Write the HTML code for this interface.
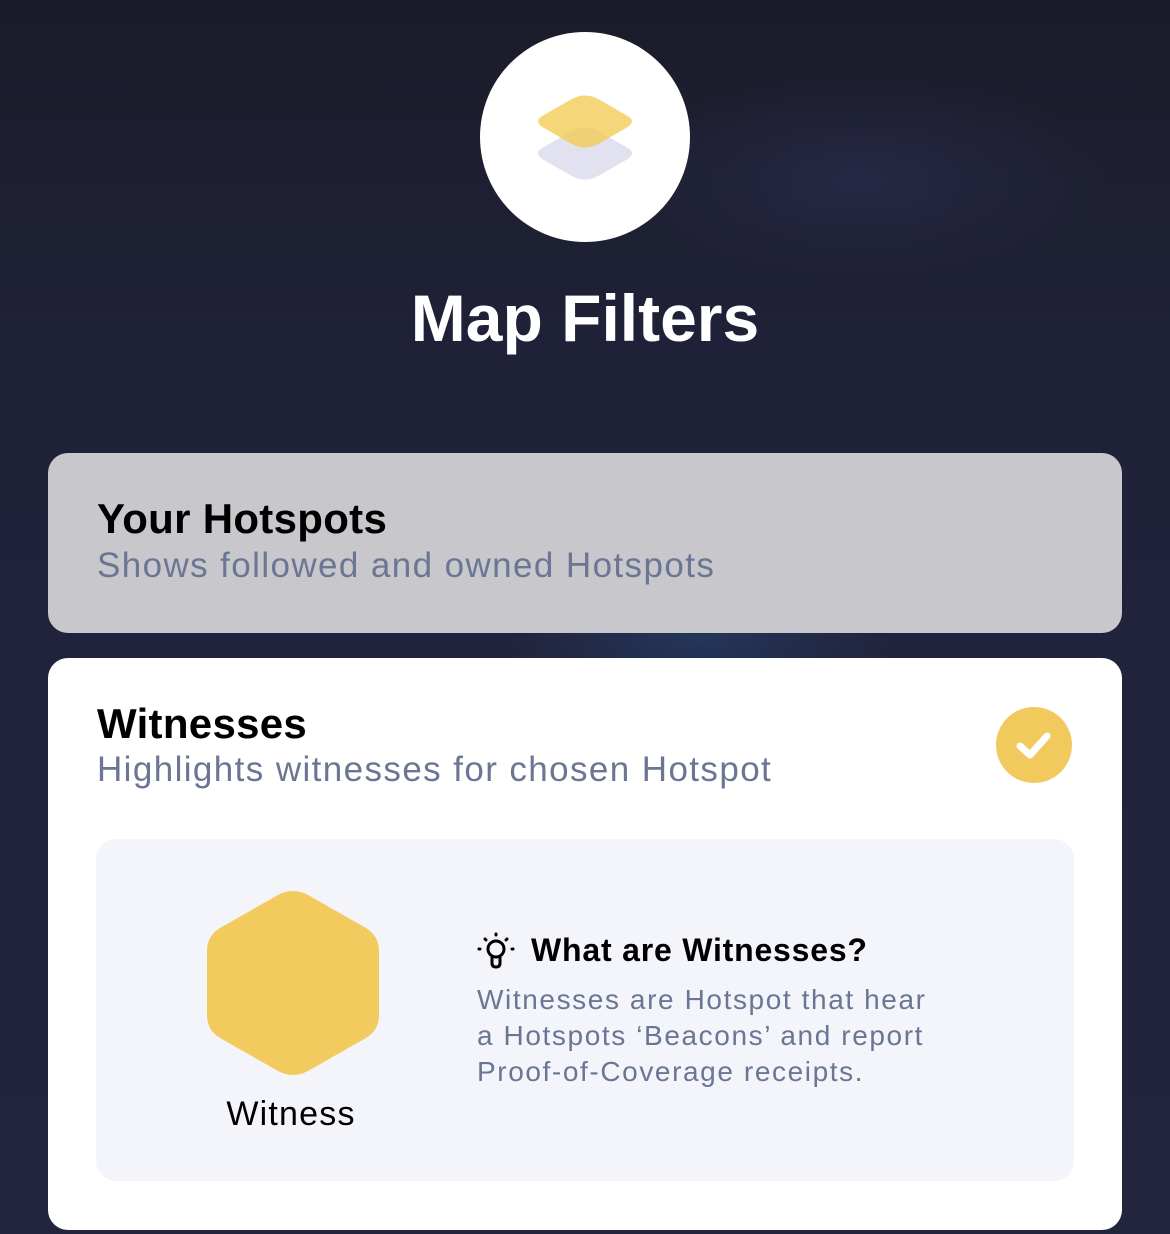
<!DOCTYPE html>
<html><head><style>
*{margin:0;padding:0;box-sizing:border-box}
body{width:1170px;height:1234px;overflow:hidden;font-family:"Liberation Sans",sans-serif;
background:radial-gradient(ellipse 250px 100px at 860px 180px,#262845,transparent),radial-gradient(ellipse 200px 60px at 700px 640px,#24365a,transparent),linear-gradient(#1b1c2a 0,#20223a 400px,#23243e 1234px);position:relative}
.abs{position:absolute}
.circle{left:480px;top:32px;width:210px;height:210px;border-radius:50%;background:#fff}
h1{position:absolute;left:0;width:1170px;text-align:center;top:280px;font-size:66px;color:#fff;font-weight:bold}
.card{position:absolute;left:48px;width:1074px;border-radius:20px}
.t{position:absolute;left:49px;font-size:42px;font-weight:bold;color:#000;letter-spacing:0.3px}
.s{position:absolute;left:49px;font-size:35px;color:#6b7594;letter-spacing:1.4px}
</style></head><body>
<div class="abs circle"></div>
<svg class="abs" style="left:530px;top:88px" width="110" height="100" viewBox="0 0 110 100">
<path d="M14 59 L40 44 Q55 35 70 44 L96 59 Q108 65 96 72 L70 87 Q55 96 40 87 L14 72 Q2 65 14 59Z" fill="#e1e1ef"/>
<path d="M14 27 L40 12 Q55 3 70 12 L96 27 Q108 33 96 40 L70 55 Q55 64 40 55 L14 40 Q2 33 14 27Z" fill="#f2c94c" opacity="0.75"/>
</svg>
<h1>Map Filters</h1>
<div class="card" style="top:453px;height:180px;background:#c7c7cc">
<div class="t" style="top:42px">Your Hotspots</div>
<div class="s" style="top:93px">Shows followed and owned Hotspots</div>
</div>
<div class="card" style="top:658px;height:572px;background:#fff">
<div class="t" style="top:42px">Witnesses</div>
<div class="s" style="top:92px">Highlights witnesses for chosen Hotspot</div>
<svg class="abs" style="left:948px;top:49px" width="76" height="76" viewBox="0 0 76 76"><circle cx="38" cy="38" r="38" fill="#f2c95d"/><path d="M24 39 L34 48 L51 29" stroke="#fff" stroke-width="7" fill="none" stroke-linecap="round" stroke-linejoin="round"/></svg>
<div class="abs" style="left:48px;top:181px;width:978px;height:342px;background:#f4f5fa;border-radius:20px">
<svg class="abs" style="left:110px;top:48px" width="174" height="192" viewBox="0 0 174 192">
<path d="M72 8 Q87 0 102 8 L160 41 Q173 49 173 64 L173 128 Q173 143 160 151 L102 184 Q87 192 72 184 L14 151 Q1 143 1 128 L1 64 Q1 49 14 41Z" fill="#f3ca5e"/></svg>
<div class="abs" style="left:0;width:390px;text-align:center;top:256px;font-size:34px;color:#000;letter-spacing:1.2px">Witness</div>
<svg class="abs" style="left:380px;top:92px" width="40" height="40" viewBox="0 0 40 40" fill="none" stroke="#000" stroke-width="3" stroke-linecap="round">
<circle cx="20" cy="18" r="8"/><path d="M16 26 v6 q0 4 4 4 q4 0 4 -4 v-6"/><path d="M20 3v1M9 8l1 1M31 8l-1 1M3 18h1M36 18h1"/></svg>
<div class="abs" style="left:435px;top:93px;font-size:32px;font-weight:bold;color:#000;letter-spacing:0.8px">What are Witnesses?</div>
<div class="abs" style="left:381px;top:143px;font-size:28px;line-height:36px;color:#6b7594;letter-spacing:1.6px">Witnesses are Hotspot that hear<br>a Hotspots ‘Beacons’ and report<br>Proof-of-Coverage receipts.</div>
</div>
</div>
</body></html>
